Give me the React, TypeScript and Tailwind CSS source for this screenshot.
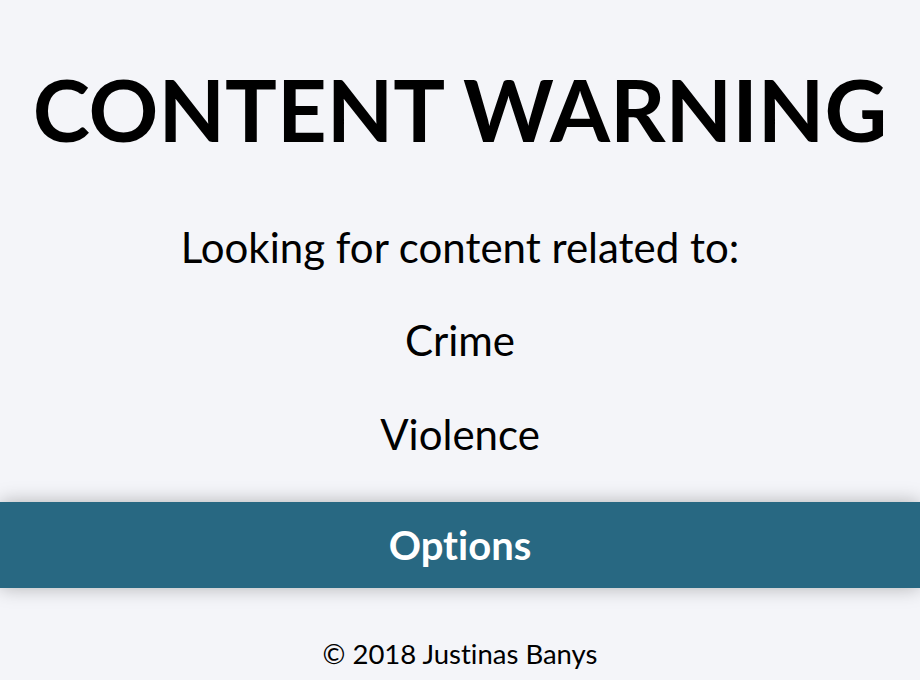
export default function App() {
  return (
    <div
      className="min-h-[680px] w-full bg-[#f4f5f9] text-black flex flex-col items-center overflow-hidden [font-variant-ligatures:none]"
      style={{ fontFamily: "Lato, 'Open Sans', sans-serif" }}
    >
      <h1 className="mt-[66px] text-[86.5px] leading-none font-bold whitespace-nowrap">
        CONTENT WARNING
      </h1>
      <p className="mt-[73px] text-[42px] leading-none">Looking for content related to:</p>
      <p className="mt-[51px] text-[42px] leading-none">Crime</p>
      <p className="mt-[52px] text-[42px] leading-none">Violence</p>
      <div className="mt-[47px] w-full h-[86px] bg-[#286882] flex items-center justify-center shadow-[0_0_18px_rgba(0,0,0,0.28)]">
        <span className="text-white text-[40px] leading-none font-bold">Options</span>
      </div>
      <p className="mt-[52px] text-[27.5px] leading-none">© 2018 Justinas Banys</p>
    </div>
  );
}
